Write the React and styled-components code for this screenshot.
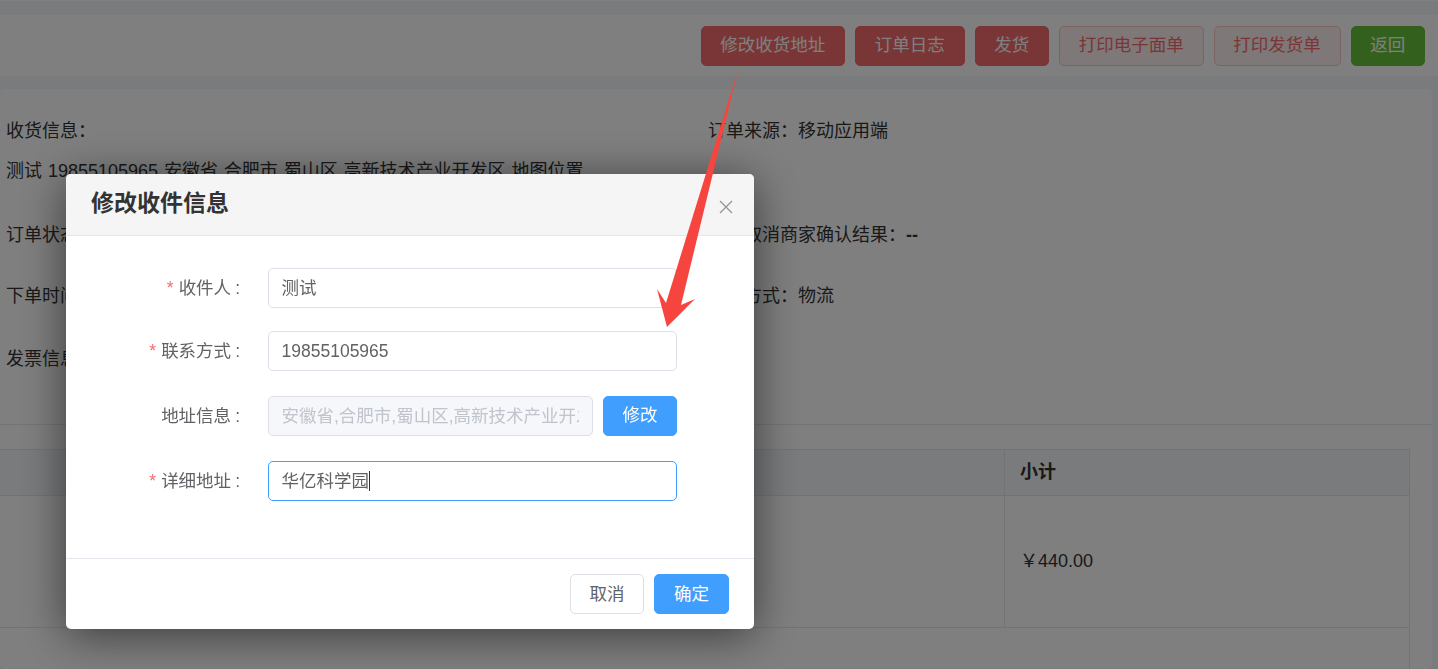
import React from 'react';
import styled, { createGlobalStyle } from 'styled-components';

const Global = createGlobalStyle`
  html, body { margin: 0; padding: 0; height: 100%; overflow: hidden; }
  body { font-family: "Liberation Sans", "Noto Sans CJK SC", sans-serif; font-size: 17.5px; color: #333; background: #f4f6fa; }
  * { box-sizing: border-box; }
`;

const Page = styled.div`
  height: 669px;
  overflow: hidden;
  display: flex;
  flex-direction: column;
  border-top: 1px solid #fff;
`;
const Toolbar = styled.div`
  margin-top: 14px;
  height: 61px;
  flex: none;
  background: #fff;
  display: flex;
  align-items: center;
  justify-content: flex-end;
  gap: 10px;
  padding-right: 13px;
`;
const ActionButton = styled.button`
  height: 40px;
  padding: 0 18.75px 4px;
  font: inherit;
  border-radius: 5px;
  white-space: nowrap;
  border: 1px solid ${p => ({ danger: '#f56c6c', plain: '#fbc4c4', success: '#67c23a' }[p.$kind])};
  background: ${p => ({ danger: '#f56c6c', plain: '#fef0f0', success: '#67c23a' }[p.$kind])};
  color: ${p => (p.$kind === 'plain' ? '#f56c6c' : '#fff')};
`;
const Card = styled.div`
  margin: 13px 6px 0 0;
  flex: 1;
  background: #fff;
  border-radius: 5px;
  min-height: 0;
  overflow: hidden;
  font-size: 18px;
`;
const InfoGrid = styled.div`
  display: grid;
  grid-template-columns: 702px 1fr;
  grid-template-rows: 40px 64px 61px 63px 54px;
  padding: 30px 0 23px 6px;
  line-height: 24px;
  border-bottom: 1px solid #e6e8ee;
  color: #333;
  word-spacing: 0.9px;
`;
const InfoItem = styled.div`
  grid-column: ${p => p.$col};
  grid-row: ${p => p.$row};
  white-space: nowrap;
`;
const Strong = styled.b`
  font-weight: 700;
`;
const Table = styled.div`
  margin: 24px 22px 0 0;
  height: 260px;
  border-right: 1px solid #e4e7ed;
`;
const TableRow = styled.div`
  display: grid;
  grid-template-columns: 1004px 1fr;
  height: ${p => p.$h}px;
  background: ${p => (p.$head ? '#f4f6fa' : 'transparent')};
  border-bottom: 1px solid #e4e7ed;
  ${p => (p.$head ? 'border-top: 1px solid #e4e7ed;' : '')}
`;
const Cell = styled.div`
  border-left: ${p => (p.$first ? 'none' : '1px solid #e4e7ed')};
  display: flex;
  align-items: center;
  padding: 0 0 6px 15px;
  font-weight: ${p => (p.$bold ? 700 : 400)};
`;

const Overlay = styled.div`
  position: fixed;
  inset: 0;
  background: rgba(0, 0, 0, 0.5);
`;
const Modal = styled.div`
  position: fixed;
  left: 66px;
  top: 174px;
  width: 688px;
  height: 455px;
  background: #fff;
  border-radius: 5px;
  box-shadow: 0 6px 45px rgba(0, 0, 0, 0.55);
  display: flex;
  flex-direction: column;
  overflow: hidden;
`;
const ModalHeader = styled.div`
  height: 62px;
  flex: none;
  background: #f5f5f5;
  border-bottom: 1px solid #e4e7ed;
  display: flex;
  align-items: center;
  justify-content: space-between;
  padding: 0 20px 7px 25px;
`;
const ModalTitle = styled.h2`
  margin: 0;
  font-size: 23px;
  font-weight: 700;
  color: #333;
`;
const CloseButton = styled.span`
  display: flex;
  color: #909399;
  margin-top: 12px;
`;
const ModalBody = styled.div`
  flex: 1;
  padding-top: 32px;
  display: flex;
  flex-direction: column;
`;
const FormRow = styled.div`
  display: flex;
  align-items: center;
  height: 40px;
  margin-bottom: ${p => p.$mb}px;
`;
const FormLabel = styled.label`
  width: 177px;
  flex: none;
  text-align: right;
  color: #606266;
  white-space: nowrap;
  margin-right: 25px;
  padding: 0 3px 4px 0;
`;
const Required = styled.span`
  color: #f56c6c;
  margin-right: 5px;
`;
const Colon = styled.span`
  margin-left: 4px;
`;
const Field = styled.div`
  flex: none;
  width: ${p => p.$w}px;
  height: 40px;
  border: 1.25px solid ${p => (p.$focus ? '#409eff' : '#dcdfe6')};
  border-radius: 5px;
  background: ${p => (p.$disabled ? '#f5f7fa' : '#fff')};
  color: ${p => (p.$disabled ? '#c0c4cc' : '#606266')};
  padding: 0 13px 0 12.5px;
  line-height: 38px;
  white-space: nowrap;
  overflow: hidden;
`;
const Clip = styled.div`
  overflow: hidden;
`;
const Caret = styled.span`
  display: inline-block;
  width: 1px;
  height: 20px;
  background: #333;
  vertical-align: -4px;
`;
const PrimaryButton = styled.button`
  height: 40px;
  width: ${p => p.$w}px;
  margin-left: ${p => p.$ml || 0}px;
  padding: 0 0 ${p => p.$pb || 2}px;
  font: inherit;
  color: #fff;
  background: #409eff;
  border: 1px solid #409eff;
  border-radius: 5px;
`;
const GhostButton = styled(PrimaryButton)`
  color: #606266;
  background: #fff;
  border-color: #dcdfe6;
`;
const ModalFooter = styled.div`
  height: 71px;
  flex: none;
  border-top: 1px solid #e4e7ed;
  display: flex;
  align-items: center;
  justify-content: flex-end;
  padding: 0 25px 1px 0;
  gap: 10px;
`;
const Arrow = styled.svg`
  position: fixed;
  left: 0;
  top: 0;
  pointer-events: none;
`;

const FW = '\uFF1A';
const YEN = '\uFFE5';

const actions = [
  ['修改收货地址', 'danger'],
  ['订单日志', 'danger'],
  ['发货', 'danger'],
  ['打印电子面单', 'plain'],
  ['打印发货单', 'plain'],
  ['返回', 'success'],
];

export default function App() {
  return (
    <>
      <Global />
      <Page>
        <Toolbar>
          {actions.map(([t, k]) => (
            <ActionButton key={t} $kind={k}>{t}</ActionButton>
          ))}
        </Toolbar>
        <Card>
          <InfoGrid>
            <InfoItem $col={1} $row={1}>收货信息{FW}</InfoItem>
            <InfoItem $col={2} $row={1}>订单来源{FW}移动应用端</InfoItem>
            <InfoItem $col={1} $row={2}>测试 19855105965 安徽省 合肥市 蜀山区 高新技术产业开发区 地图位置</InfoItem>
            <InfoItem $col={1} $row={3}>订单状态</InfoItem>
            <InfoItem $col={2} $row={3}>订单取消商家确认结果{FW}<Strong>--</Strong></InfoItem>
            <InfoItem $col={1} $row={4}>下单时间</InfoItem>
            <InfoItem $col={2} $row={4}>配送方式{FW}物流</InfoItem>
            <InfoItem $col={1} $row={5}>发票信息</InfoItem>
          </InfoGrid>
          <Table>
            <TableRow $head $h={47}>
              <Cell $first />
              <Cell $bold>小计</Cell>
            </TableRow>
            <TableRow $h={132}>
              <Cell $first />
              <Cell>{YEN}440.00</Cell>
            </TableRow>
          </Table>
        </Card>
      </Page>
      <Overlay />
      <Modal>
        <ModalHeader>
          <ModalTitle>修改收件信息</ModalTitle>
          <CloseButton>
            <svg width="16" height="16" viewBox="0 0 16 16" fill="none" stroke="currentColor" strokeWidth="1.2">
              <path d="M2 2l12 12M14 2L2 14" />
            </svg>
          </CloseButton>
        </ModalHeader>
        <ModalBody>
          <FormRow $mb={23}>
            <FormLabel><Required>*</Required>收件人<Colon>:</Colon></FormLabel>
            <Field $w={409}>测试</Field>
          </FormRow>
          <FormRow $mb={25}>
            <FormLabel><Required>*</Required>联系方式<Colon>:</Colon></FormLabel>
            <Field $w={409}>19855105965</Field>
          </FormRow>
          <FormRow $mb={25}>
            <FormLabel>地址信息<Colon>:</Colon></FormLabel>
            <Field $w={325} $disabled><Clip>安徽省,合肥市,蜀山区,高新技术产业开发区</Clip></Field>
            <PrimaryButton $w={74} $ml={10} $pb={6}>修改</PrimaryButton>
          </FormRow>
          <FormRow $mb={0}>
            <FormLabel><Required>*</Required>详细地址<Colon>:</Colon></FormLabel>
            <Field $w={409} $focus>华亿科学园<Caret /></Field>
          </FormRow>
        </ModalBody>
        <ModalFooter>
          <GhostButton $w={74}>取消</GhostButton>
          <PrimaryButton $w={75}>确定</PrimaryButton>
        </ModalFooter>
      </Modal>
      <Arrow width="1438" height="669" viewBox="0 0 1438 669">
        <polygon points="738,70 681,305 695,299 667,327 657,289 666,303" fill="#f6453f" />
      </Arrow>
    </>
  );
}
